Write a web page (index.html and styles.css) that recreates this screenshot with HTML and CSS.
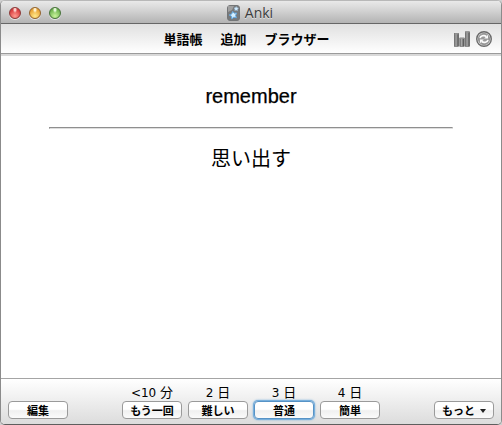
FILE: index.html
```
<!DOCTYPE html>
<html lang="ja">
<head>
<meta charset="utf-8">
<title>Anki</title>
<link rel="stylesheet" href="styles.css">
</head>
<body>
<div class="window">
  <header class="titlebar">
    <div class="lights"><i class="light red"></i><i class="light amber"></i><i class="light green"></i></div>
    <div class="title">
      <svg class="logo" width="13" height="16" viewBox="0 0 13 16">
        <rect x=".5" y=".5" width="12" height="15" rx="2.5" fill="#77797b" stroke="#737577"/>
        <path d="M1 1h6L5 5 1 7z" fill="#a0a0a0"/>
        <path d="M5.7 6.4l1.5 1.8 2.5-.2-1.1 2.3.8 2.5-2.6-.6-2 1.7-.3-2.7-2.3-1.2 2.5-1z" fill="#d5efff" stroke="#62a8e2" stroke-width="1"/>
        <path d="M9.2 1.6l.6 1.2 1.6.2-1 1.2.1 1.4-1.5-.6-1.2.5.2-1.5-.9-1 1.4-.2z" fill="#d5edff" stroke="#a4cdea" stroke-width=".5"/>
      </svg>
      <span>Anki</span>
    </div>
  </header>
  <nav class="toolbar">
    <div class="links"><a>単語帳</a><a>追加</a><a>ブラウザー</a></div>
    <div class="tools">
      <svg width="16" height="16" viewBox="0 0 16 16">
        <defs><linearGradient id="bar"><stop offset="0" stop-color="#666"/><stop offset=".4" stop-color="#aaa"/><stop offset="1" stop-color="#444"/></linearGradient></defs>
        <g fill="url(#bar)" stroke="#5c5c5c" stroke-width=".6">
          <rect x=".4" y="2.5" width="4.2" height="12.8"/><rect x="5.8" y="7" width="4.4" height="8.3"/><rect x="11.4" y=".8" width="4.2" height="14.5"/>
        </g>
        <path d="M.5 2.8h4M6 7.3h4M11.5 1.1h4" stroke="#999"/>
      </svg>
      <svg width="16" height="16" viewBox="0 0 16 16">
        <circle cx="8" cy="8" r="7.3" fill="#dadada" stroke="#6c6c6c" stroke-width="1.4"/>
        <circle cx="8" cy="8" r="5.6" fill="#9a9a9a" stroke="#8a8a8a" stroke-width=".8"/>
        <path d="M4 7.2C4.5 4.8 8 3.8 10.3 5.5M12 8.8c-.5 2.4-4 3.4-6.3 1.7" fill="none" stroke="#fafafa" stroke-width="1.6"/>
        <path d="M12 3.8v3.8H8.2zM4 12.2V8.4h3.8z" fill="#fafafa"/>
      </svg>
    </div>
  </nav>
  <main class="card">
    <div class="front">remember</div>
    <hr>
    <div class="back">思い出す</div>
  </main>
  <footer class="bottom">
    <button>編集</button>
    <div class="answers">
      <div class="answer"><span>&lt;10 <b>分</b></span><button>もう一回</button></div>
      <div class="answer"><span>2 <b>日</b></span><button>難しい</button></div>
      <div class="answer"><span>3 <b>日</b></span><button class="focused">普通</button></div>
      <div class="answer"><span>4 <b>日</b></span><button>簡単</button></div>
    </div>
    <button class="more">もっと<i class="caret"></i></button>
  </footer>
</div>
</body>
</html>
```
FILE: styles.css
```
* { box-sizing: border-box; }
body {
  margin: 0;
  height: 425px;
  overflow: hidden;
  background: #d0d0d0;
  color: #000;
  font-family: "Liberation Sans", "Noto Sans CJK JP", sans-serif;
}
.window {
  display: flex;
  flex-direction: column;
  height: 425px;
  border: 1px solid #8b8b8b;
  border-top-color: #b8b8b8;
  border-bottom-color: #5e5e5e;
  border-radius: 5px;
  overflow: hidden;
  background: #fff;
}
.titlebar {
  display: grid;
  grid-template-columns: 1fr auto 1fr;
  align-items: center;
  height: 23px;
  padding: 1px 8px 0;
  background: linear-gradient(#e9e9e9, #d2d2d2 45%, #b3b3b3);
  border-bottom: 1px solid #666;
}
.lights { display: flex; gap: 8px; }
.light {
  width: 12px;
  height: 12px;
  border-radius: 50%;
  border: 1px solid;
  box-shadow: 0 1px 0 #e5e5e5;
}
.red { border-color: #8c3a38; background: radial-gradient(ellipse at 50% 15%, #fbd0cc 0 12%, transparent 30%), radial-gradient(circle at 50% 80%, #ff9a90, #dc4244 65%, #b93436); }
.amber { border-color: #93642d; background: radial-gradient(ellipse at 50% 15%, #fff2cf 0 12%, transparent 30%), radial-gradient(circle at 50% 80%, #ffe98b, #eba83b 65%, #c68328); }
.green { border-color: #47733a; background: radial-gradient(ellipse at 50% 15%, #e5f8da 0 12%, transparent 30%), radial-gradient(circle at 50% 80%, #c9f49b, #75b855 65%, #548e3e); }
.title {
  display: flex;
  align-items: center;
  gap: 5px;
  margin-right: 2px;
  font: 14px/16px "Open Sans", sans-serif;
  color: #3c3c3c;
  text-shadow: 0 1px 0 #e2e2e2;
}
.logo { display: block; }
.toolbar {
  display: grid;
  grid-template-columns: 1fr auto 1fr;
  align-items: center;
  height: 32px;
  padding: 0 9px 1px 7px;
  background: linear-gradient(#e0e0e0, #fff 29px);
  border-bottom: 2px solid #d9d9d9;
  box-shadow: inset 0 -1px 0 #9b9b9b;
}
.links {
  grid-column: 2;
  display: flex;
  gap: 18px;
  margin-right: 7px;
  font: bold 13px/18px "Noto Sans CJK JP", sans-serif;
}
.tools { display: flex; gap: 6px; justify-content: flex-end; }
.tools svg { display: block; }
.card {
  flex: 1;
  padding: 28px 48px 0;
  text-align: center;
  font-size: 20px;
  line-height: 24px;
}
hr {
  height: 2px;
  margin: 19px 0 18px;
  border: 1px solid;
  border-color: #8f8f8f #dedede #dedede #8f8f8f;
}
.front, .back { height: 24px; }
.front { -webkit-text-stroke: .25px #000; }
.bottom {
  display: flex;
  justify-content: space-between;
  align-items: flex-end;
  height: 46px;
  padding: 0 7px 5px;
  border-top: 1px solid #a5a5a5;
  background: linear-gradient(#fff, #dcdcdc);
}
.answers { display: flex; gap: 6px; }
.answer { display: flex; flex-direction: column; align-items: center; }
.answer span {
  font: 12px/16px "DejaVu Sans", "Noto Sans CJK JP", sans-serif;
  height: 16px;
  white-space: nowrap;
}
.answer b { font-weight: normal; font-size: 13px; line-height: 1; }
button {
  display: flex;
  align-items: center;
  justify-content: center;
  width: 60px;
  height: 18px;
  padding: 0;
  border: 1px solid #9a9a9a;
  border-radius: 4px;
  background: linear-gradient(#fff, #fff 45%, #f0f0f0 55%, #fbfbfb);
  color: #000;
  font: bold 11px/16px "Noto Sans CJK JP", sans-serif;
}
.focused { border-color: #5793c6; box-shadow: 0 0 0 1px #78afdc, 0 0 2px 1px #78afdc; }
.more { gap: 5px; }
.caret { margin-top: 1px; border: 3.5px solid transparent; border-top: 4px solid #222; border-bottom: 0; }
```
